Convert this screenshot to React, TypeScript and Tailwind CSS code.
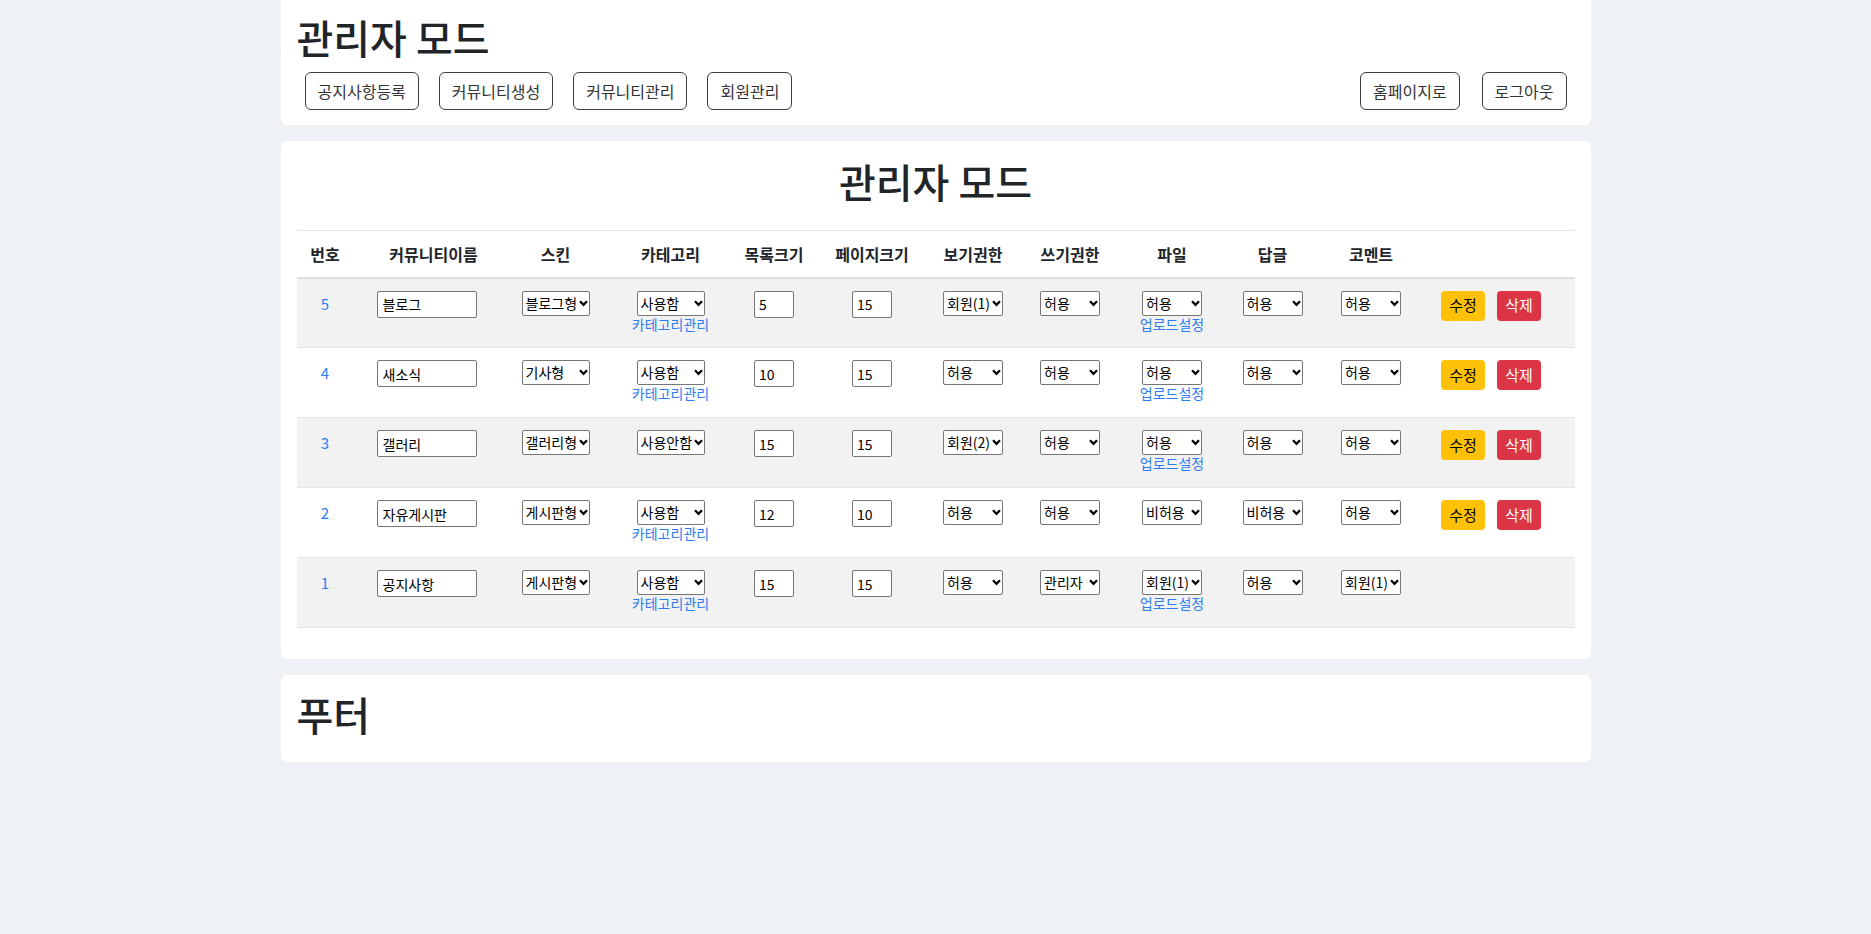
import React from "react";

type Row = {
  id: number;
  name: string;
  skin: string;
  cat: string;
  catLink: boolean;
  list: string;
  page: string;
  view: string;
  write: string;
  file: string;
  fileLink: boolean;
  reply: string;
  comment: string;
  actions: boolean;
};

const rows: Row[] = [
  { id: 5, name: "블로그", skin: "블로그형", cat: "사용함", catLink: true, list: "5", page: "15", view: "회원(1)", write: "허용", file: "허용", fileLink: true, reply: "허용", comment: "허용", actions: true },
  { id: 4, name: "새소식", skin: "기사형", cat: "사용함", catLink: true, list: "10", page: "15", view: "허용", write: "허용", file: "허용", fileLink: true, reply: "허용", comment: "허용", actions: true },
  { id: 3, name: "갤러리", skin: "갤러리형", cat: "사용안함", catLink: false, list: "15", page: "15", view: "회원(2)", write: "허용", file: "허용", fileLink: true, reply: "허용", comment: "허용", actions: true },
  { id: 2, name: "자유게시판", skin: "게시판형", cat: "사용함", catLink: true, list: "12", page: "10", view: "허용", write: "허용", file: "비허용", fileLink: false, reply: "비허용", comment: "허용", actions: true },
  { id: 1, name: "공지사항", skin: "게시판형", cat: "사용함", catLink: true, list: "15", page: "15", view: "허용", write: "관리자", file: "회원(1)", fileLink: true, reply: "허용", comment: "회원(1)", actions: false },
];

function Sel({ value, wide }: { value: string; wide?: boolean }) {
  return (
    <span className="relative inline-block align-top">
      <select
        defaultValue={value}
        className={
          (wide ? "w-[68px] " : "w-[60px] ") +
          "block h-[25px] appearance-none overflow-hidden rounded-[2px] border border-[#767676] bg-white pl-[3px] pr-[10px] text-left text-[14px] leading-[23px] text-black font-['Noto_Sans_CJK_KR',sans-serif]"
        }
      >
        <option>{value}</option>
      </select>
      <svg
        className="pointer-events-none absolute right-[2px] top-[9px]"
        width="9"
        height="7"
        viewBox="0 0 9 7"
      >
        <path d="M1 1.2l3.5 3.6L8 1.2" stroke="#000" strokeWidth="2.2" fill="none" />
      </svg>
    </span>
  );
}

function Link({ children }: { children: React.ReactNode }) {
  return (
    <a className="block cursor-pointer text-[14px] leading-[17px] text-[#2b7cf0]">{children}</a>
  );
}

function NavBtn({ children }: { children: React.ReactNode }) {
  return (
    <button className="h-[38px] rounded-[6px] border border-[#3d3d3d] bg-white px-[12px] text-[16px] leading-[24px] text-[#333]">
      {children}
    </button>
  );
}

export default function App() {
  return (
    <div className="min-h-[934px] bg-[#eef1f6] font-['Noto_Sans_CJK_KR','Noto_Sans',sans-serif] text-[#212529]">
      <div className="mx-auto flex w-[1310px] flex-col gap-4">
        {/* Header */}
        <div className="rounded-b-[6px] bg-white px-4 pb-[15px] pt-[13px]">
          <h1 className="text-[40px] font-medium leading-[48px]">관리자 모드</h1>
          <div className="mt-[11px] flex items-center justify-between px-2">
            <div className="flex gap-5">
              <NavBtn>공지사항등록</NavBtn>
              <NavBtn>커뮤니티생성</NavBtn>
              <NavBtn>커뮤니티관리</NavBtn>
              <NavBtn>회원관리</NavBtn>
            </div>
            <div className="flex gap-[22px]">
              <NavBtn>홈페이지로</NavBtn>
              <NavBtn>로그아웃</NavBtn>
            </div>
          </div>
        </div>

        {/* Main */}
        <div className="rounded-[6px] bg-white px-4 pb-[31px] pt-[16px]">
          <h1 className="text-center text-[40px] font-medium leading-[48px]">관리자 모드</h1>
          <table className="mt-[25px] w-full table-fixed border-collapse">
            <colgroup>
              <col className="w-[57px]" />
              <col className="w-[160px]" />
              <col className="w-[84px]" />
              <col className="w-[146px]" />
              <col className="w-[61px]" />
              <col className="w-[135px]" />
              <col className="w-[67px]" />
              <col className="w-[127px]" />
              <col className="w-[77px]" />
              <col className="w-[124px]" />
              <col className="w-[73px]" />
              <col className="w-[167px]" />
            </colgroup>
            <thead>
              <tr>
                {["번호", "커뮤니티이름", "스킨", "카테고리", "목록크기", "페이지크기", "보기권한", "쓰기권한", "파일", "답글", "코멘트", ""].map((h, i) => (
                  <th
                    key={i}
                    className="h-[47px] whitespace-nowrap border-b-2 border-t border-b-[#dcdfe3] border-t-[#e3e5e8] p-0 text-center align-middle text-[16px] font-bold"
                  >
                    {h}
                  </th>
                ))}
              </tr>
            </thead>
            <tbody>
              {rows.map((r, idx) => (
                <tr key={r.id} className={idx % 2 === 0 ? "bg-[#f2f2f2]" : "bg-white"}>
                  <td className="h-[70px] border-b border-[#e3e5e8] p-0 pt-[12px] text-center align-top">
                    <a className="text-[15px] leading-[22px] text-[#2b7cf0]">{r.id}</a>
                  </td>
                  <td className="border-b border-[#e3e5e8] p-0 pt-[12px] text-center align-top">
                    <input
                      defaultValue={r.name}
                      className="mr-[14px] h-[27px] w-[100px] rounded-[2px] border border-[#767676] bg-white px-[5px] text-[14px] text-black"
                    />
                  </td>
                  <td className="border-b border-[#e3e5e8] p-0 pt-[12px] text-center align-top">
                    <Sel value={r.skin} wide />
                  </td>
                  <td className="border-b border-[#e3e5e8] p-0 pt-[12px] text-center align-top">
                    <Sel value={r.cat} wide />
                    {r.catLink && <Link>카테고리관리</Link>}
                  </td>
                  <td className="border-b border-[#e3e5e8] p-0 pt-[12px] text-center align-top">
                    <input
                      defaultValue={r.list}
                      className="h-[27px] w-[40px] rounded-[2px] border border-[#767676] bg-white px-[4px] text-[14px] text-black"
                    />
                  </td>
                  <td className="border-b border-[#e3e5e8] p-0 pt-[12px] text-center align-top">
                    <input
                      defaultValue={r.page}
                      className="h-[27px] w-[40px] rounded-[2px] border border-[#767676] bg-white px-[4px] text-[14px] text-black"
                    />
                  </td>
                  <td className="border-b border-[#e3e5e8] p-0 pt-[12px] text-center align-top">
                    <Sel value={r.view} />
                  </td>
                  <td className="border-b border-[#e3e5e8] p-0 pt-[12px] text-center align-top">
                    <Sel value={r.write} />
                  </td>
                  <td className="border-b border-[#e3e5e8] p-0 pt-[12px] text-center align-top">
                    <Sel value={r.file} />
                    {r.fileLink && <Link>업로드설정</Link>}
                  </td>
                  <td className="border-b border-[#e3e5e8] p-0 pt-[12px] text-center align-top">
                    <Sel value={r.reply} />
                  </td>
                  <td className="border-b border-[#e3e5e8] p-0 pt-[12px] text-center align-top">
                    <Sel value={r.comment} />
                  </td>
                  <td className="border-b border-[#e3e5e8] p-0 pt-[12px] text-center align-top">
                    {r.actions && (
                      <div className="flex justify-center gap-[12px]">
                        <button className="h-[30px] w-[44px] rounded-[4px] bg-[#ffc107] text-[15px] text-black">수정</button>
                        <button className="h-[30px] w-[44px] rounded-[4px] bg-[#dc3545] text-[15px] text-white">삭제</button>
                      </div>
                    )}
                  </td>
                </tr>
              ))}
            </tbody>
          </table>
        </div>

        {/* Footer */}
        <div className="rounded-[6px] bg-white px-4 pb-[24px] pt-[15px]">
          <h1 className="text-[40px] font-medium leading-[48px]">푸터</h1>
        </div>
      </div>
    </div>
  );
}
